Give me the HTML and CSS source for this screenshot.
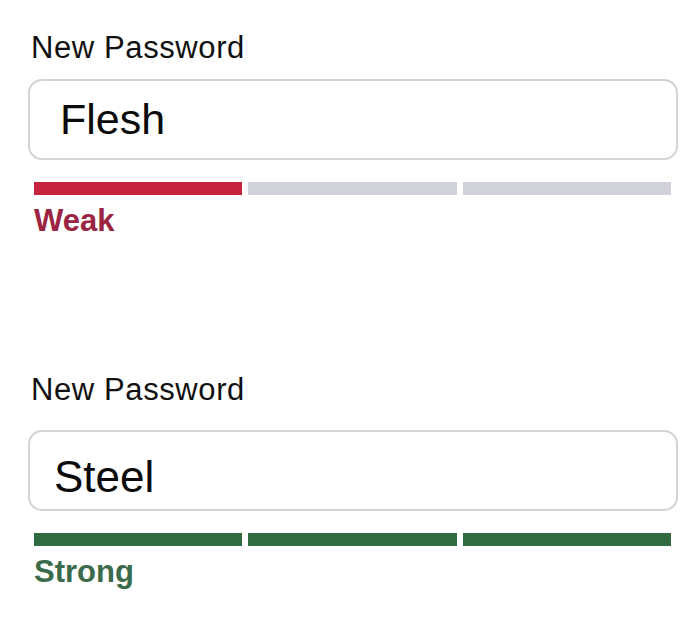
FILE: index.html
```html
<!DOCTYPE html>
<html lang="en">
   <head>
      <meta charset="UTF-8">
      <meta name="viewport" content="width=device-width, initial-scale=1.0">
      <title>New Password</title>
      <link rel="stylesheet" href="styles.css">
   </head>
   <body>
      <div class="field field-weak">
         <label class="label">New Password</label>
         <div class="input">Flesh</div>
         <div class="meter">
            <span class="bar on"></span>
            <span class="bar"></span>
            <span class="bar"></span>
         </div>
         <div class="strength">Weak</div>
      </div>
      <div class="field field-strong">
         <label class="label">New Password</label>
         <div class="input">Steel</div>
         <div class="meter">
            <span class="bar on"></span>
            <span class="bar on"></span>
            <span class="bar on"></span>
         </div>
         <div class="strength">Strong</div>
      </div>
   </body>
</html>
```

FILE: styles.css
```css
body {
margin: 0;
padding: 31px 0 0 28px;
background: #fff;
font-family: "Liberation Sans", Arial, sans-serif;
color: #111;
}
.field {
width: 650px;
}
.field + .field {
margin-top: 135px;
}
.label {
display: block;
padding-left: 3px;
font-size: 31px;
line-height: 34px;
letter-spacing: 0.6px;
margin-bottom: 14px;
}
.input {
box-sizing: border-box;
height: 81px;
border: 2px solid #d2d2d8;
border-radius: 14px;
padding: 14px 0 0 30px;
font-size: 43px;
line-height: 48px;
color: #0a0a0a;
}
.meter {
display: flex;
gap: 6px;
margin: 22px 7px 0 6px;
}
.bar {
flex: 1;
height: 13px;
background: #d1d1da;
}
.strength {
margin-top: 9px;
padding-left: 6px;
font-size: 31px;
line-height: 34px;
font-weight: bold;
}
.field-weak .bar.on {
background: #c6233f;
}
.field-weak .strength {
color: #9c2443;
}
.field-strong .label {
margin-bottom: 23px;
}
.field-strong .input {
padding: 21px 0 0 24px;
font-size: 44px;
}
.field-strong .bar.on {
background: #2f6a41;
}
.field-strong .strength {
color: #3b6b4a;
}
```
